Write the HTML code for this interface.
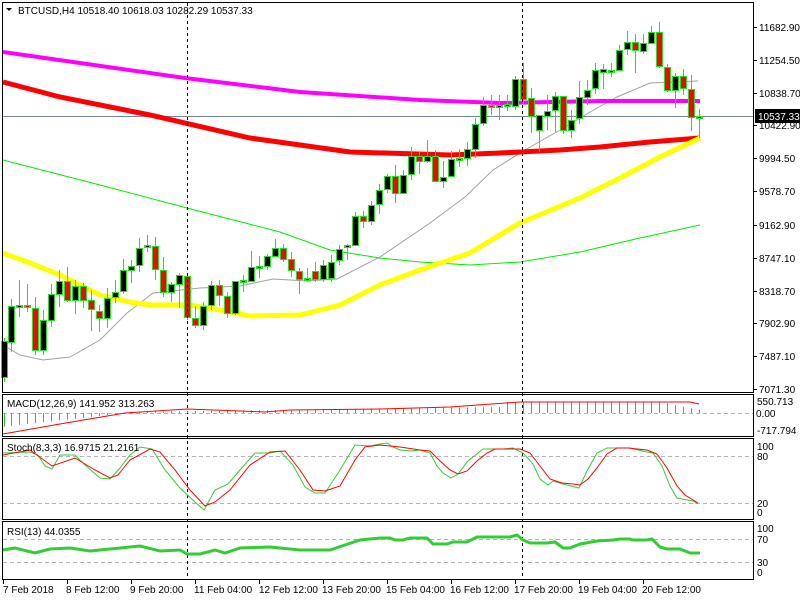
<!DOCTYPE html>
<html><head><meta charset="utf-8">
<style>
html,body{margin:0;padding:0;background:#fff;}
svg{display:block;font-family:"Liberation Sans",sans-serif;font-size:10px;}
</style></head>
<body>
<svg id="c" width="800" height="600" xmlns="http://www.w3.org/2000/svg">
<rect width="800" height="600" fill="#fff"/>
<!-- grid / levels -->
<g stroke="#b4b4b4" stroke-dasharray="4,3" stroke-width="1">
<line x1="3" y1="413.5" x2="753" y2="413.5"/>
<line x1="3" y1="456.5" x2="753" y2="456.5"/>
<line x1="3" y1="503.5" x2="753" y2="503.5"/>
<line x1="3" y1="539.5" x2="753" y2="539.5"/>
<line x1="3" y1="562.5" x2="753" y2="562.5"/>
</g>
<line x1="3" y1="116.5" x2="753" y2="116.5" stroke="#778899" stroke-width="1"/>
<!-- MAs -->
<polyline fill="none" stroke="#00ee00" stroke-width="1" points="3,160 100,185 187,208 280,232 330,250 380,258 420,262 470,265 520,262 580,252 640,238 700,225"/>
<polyline fill="none" stroke="#a0a0a0" stroke-width="1" points="3,345 20,355 43,360 70,357 100,340 127,313 153,293 200,288 240,286 273,279 307,281 337,279 380,257 430,223 465,197 493,170 525,150 560,130 590,112 617,97 650,83 698,81"/>
<polyline fill="none" stroke="#ff00ff" stroke-width="4" points="3,52 80,63 185,78 300,92 420,100 500,103 600,101 700,101"/>
<polyline fill="none" stroke="#ff0000" stroke-width="5" points="3,82 60,97 150,115 250,138 350,152 450,155 500,153 560,150 600,147 650,142 700,138"/>
<polyline fill="none" stroke="#ffff00" stroke-width="5" points="3,253 30,263 60,275 100,295 130,302 150,305 190,305 220,310 250,316 300,315 340,305 380,285 420,270 470,253 520,223 580,198 620,178 660,157 700,138"/>
<g id="candles"></g>
<!-- vertical dashed -->
<g stroke="#000" stroke-dasharray="3,3" stroke-width="1">
<line x1="187.5" y1="3" x2="187.5" y2="580"/>
<line x1="522.5" y1="3" x2="522.5" y2="580"/>
</g>
<!-- MACD -->
<g id="macd"></g>
<polyline fill="none" stroke="#ff0000" stroke-width="1" points="3,434 60,424 125,413 187,409 240,411 265,412 290,410 380,409 450,407 520,402 600,402 690,402 699,404"/>
<!-- Stoch -->
<polyline fill="none" stroke="#32cd32" stroke-width="1" points="3,453 30,452 38,455 45,466 52,469 60,455 75,455 85,465 100,478 110,479 120,468 130,455 140,447 152,449 165,470 180,488 195,502 204,510 215,490 228,484 240,470 255,453 270,453 280,451 293,465 305,487 315,493 325,493 340,470 355,445 370,446 380,444 387,443 393,447 400,450 410,451 420,450 430,453 437,466 443,473 451,478 458,474 468,461 483,449 503,449 513,448 523,453 533,464 540,479 548,485 553,481 563,484 579,488 587,471 597,453 607,448 630,448 647,452 653,453 662,466 670,486 677,498 682,499 693,501 698,504"/>
<polyline fill="none" stroke="#ff0000" stroke-width="1" points="3,455 30,450 52,466 75,458 95,470 110,478 118,475 130,460 150,449 160,452 175,470 190,490 205,506 215,502 230,490 250,465 270,452 285,451 300,470 313,490 325,491 340,486 355,460 365,447 380,445 400,447 420,450 430,451 440,461 450,470 458,474 467,471 477,461 487,453 495,449 520,449 530,453 540,466 550,479 562,483 573,484 580,485 588,479 597,468 607,454 617,448 628,448 647,450 657,454 667,468 677,486 685,495 698,503"/>
<!-- RSI -->
<polyline fill="none" stroke="#32cd32" stroke-width="3" points="3,550 15,548 35,553 50,549 70,548 90,551 110,549 140,546 160,551 180,550 187,554 200,554 215,550 225,553 240,548 270,547 300,550 330,550 345,545 360,540 380,538 390,538 395,540 403,540 410,538 427,538 433,544 447,544 453,542 467,542 477,537 510,537 517,535 523,540 530,543 547,543 555,542 563,548 570,548 580,544 597,541 613,540 620,539 630,539 633,540 647,540 652,539 660,547 667,549 680,549 690,553 700,553"/>
<!-- borders -->
<g fill="none" stroke="#000" stroke-width="1">
<rect x="2.5" y="2.5" width="751" height="390"/>
<rect x="2.5" y="394.5" width="751" height="42"/>
<rect x="2.5" y="438.5" width="751" height="81"/>
<rect x="2.5" y="521.5" width="751" height="58"/>
</g>
<!-- header -->
<polygon points="6,8 12,8 9,11" fill="#000"/>
<text x="18" y="14" fill="#000">BTCUSD,H4  10518.40 10618.03 10282.29 10537.33</text>
<text x="7" y="407" fill="#000">MACD(12,26,9) 141.952 313.263</text>
<text x="7" y="451" fill="#000">Stoch(8,3,3) 16.9715 21.2161</text>
<text x="7" y="535" fill="#000">RSI(13) 44.0355</text>
<!-- price axis -->
<g fill="#000" id="pax">
<text x="759" y="31">11682.90</text>
<text x="759" y="64">11254.50</text>
<text x="759" y="97">10838.70</text>
<text x="759" y="129">10422.90</text>
<text x="759" y="162">9994.50</text>
<text x="759" y="195">9578.70</text>
<text x="759" y="229">9162.90</text>
<text x="759" y="262">8747.10</text>
<text x="759" y="295">8318.70</text>
<text x="759" y="327">7902.90</text>
<text x="759" y="360">7487.10</text>
<text x="759" y="393">7071.30</text>
</g>
<g stroke="#000"><line x1="754" y1="27.5" x2="757" y2="27.5"/><line x1="754" y1="60.5" x2="757" y2="60.5"/><line x1="754" y1="93.5" x2="757" y2="93.5"/><line x1="754" y1="125.5" x2="757" y2="125.5"/><line x1="754" y1="158.5" x2="757" y2="158.5"/><line x1="754" y1="191.5" x2="757" y2="191.5"/><line x1="754" y1="225.5" x2="757" y2="225.5"/><line x1="754" y1="258.5" x2="757" y2="258.5"/><line x1="754" y1="291.5" x2="757" y2="291.5"/><line x1="754" y1="323.5" x2="757" y2="323.5"/><line x1="754" y1="356.5" x2="757" y2="356.5"/><line x1="754" y1="389.5" x2="757" y2="389.5"/></g>
<rect x="755" y="109" width="45" height="14" fill="#000"/>
<text x="758" y="120" fill="#fff">10537.33</text>
<g fill="#000">
<text x="757" y="405">550.713</text>
<text x="756" y="417">0.00</text>
<text x="757" y="434">-717.794</text>
<text x="757" y="450">100</text>
<text x="757" y="460">80</text>
<text x="757" y="507">20</text>
<text x="757" y="516">0</text>
<text x="757" y="532">100</text>
<text x="757" y="543">70</text>
<text x="757" y="566">30</text>
<text x="757" y="576">0</text>
</g>
<!-- time axis -->
<g fill="#000">
<text x="3" y="593">7 Feb 2018</text>
<text x="66" y="593">8 Feb 12:00</text>
<text x="130" y="593">9 Feb 20:00</text>
<text x="194" y="593">11 Feb 04:00</text>
<text x="259" y="593">12 Feb 12:00</text>
<text x="322" y="593">13 Feb 20:00</text>
<text x="386" y="593">15 Feb 04:00</text>
<text x="450" y="593">16 Feb 12:00</text>
<text x="514" y="593">17 Feb 20:00</text>
<text x="578" y="593">19 Feb 04:00</text>
<text x="642" y="593">20 Feb 12:00</text>
</g>
<g stroke="#000"><line x1="3.5" y1="580" x2="3.5" y2="584"/><line x1="67.5" y1="580" x2="67.5" y2="584"/><line x1="131.5" y1="580" x2="131.5" y2="584"/><line x1="195.5" y1="580" x2="195.5" y2="584"/><line x1="259.5" y1="580" x2="259.5" y2="584"/><line x1="323.5" y1="580" x2="323.5" y2="584"/><line x1="387.5" y1="580" x2="387.5" y2="584"/><line x1="451.5" y1="580" x2="451.5" y2="584"/><line x1="515.5" y1="580" x2="515.5" y2="584"/><line x1="579.5" y1="580" x2="579.5" y2="584"/><line x1="643.5" y1="580" x2="643.5" y2="584"/></g>
</svg>
<script>
var C=[
[4,341,377,338,382,1],[11,306,342,299,352,1],[19,305,307,280,317,1],[27,305,307,284,312,0],[35,308,350,297,355,0],[43,320,350,310,355,1],[51,294,320,284,327,1],[59,281,294,270,307,1],[67,281,300,267,302,0],[75,286,300,280,314,1],[83,286,300,283,308,0],[91,300,309,290,331,0],[99,311,318,305,332,0],[107,298,318,288,328,1],[115,292,297,280,303,1],[123,270,291,259,294,1],[131,266,270,260,283,1],[139,248,265,238,272,1],[147,245,247,235,252,1],[155,246,269,237,280,0],[163,270,292,257,297,0],[171,284,292,282,302,1],[179,275,284,273,308,1],[187,276,317,273,320,0],[195,318,325,306,328,0],[203,306,325,302,330,1],[211,285,305,281,310,1],[219,285,295,280,306,0],[227,296,313,292,318,0],[235,281,313,281,315,1],[243,280,282,275,292,1],[251,267,281,251,282,1],[259,266,268,256,278,1],[267,256,266,254,270,1],[275,248,256,239,257,1],[283,248,259,244,262,0],[291,259,270,252,277,0],[299,271,279,268,294,0],[307,278,280,268,282,1],[315,271,279,262,282,0],[323,265,279,260,282,1],[331,262,278,255,282,1],[339,249,260,245,265,1],[347,245,247,244,260,1],[355,216,245,212,246,1],[363,216,221,211,228,0],[371,205,221,201,225,1],[379,190,204,184,214,1],[387,176,189,174,193,1],[395,176,193,165,203,0],[403,175,193,170,194,1],[411,156,174,147,180,1],[419,156,161,152,174,0],[427,156,161,140,163,1],[435,156,181,150,181,0],[443,177,181,161,188,1],[451,159,176,151,177,1],[459,158,160,149,167,1],[467,149,158,142,166,1],[475,124,149,118,158,1],[483,105,123,97,126,1],[491,105,107,95,115,0],[499,105,107,95,120,1],[507,104,106,95,111,1],[515,79,106,76,110,1],[523,79,99,63,104,0],[531,98,116,88,133,0],[539,115,130,115,152,1],[547,111,116,95,130,1],[555,96,110,92,132,1],[563,96,130,96,134,0],[571,120,130,110,138,1],[579,97,118,81,124,1],[587,90,97,80,105,1],[595,70,88,63,94,1],[603,69,72,64,89,1],[611,70,72,63,77,1],[619,50,70,45,71,1],[627,42,49,31,55,1],[635,42,50,34,73,0],[643,43,51,34,54,1],[651,32,43,26,44,1],[659,32,66,22,68,0],[667,67,90,64,92,0],[675,76,90,73,108,1],[683,76,88,69,95,0],[691,89,117,75,131,0],[699,116,118,109,138,1]];
var ns="http://www.w3.org/2000/svg",g=document.getElementById('candles'),m=document.getElementById('macd');
function el(t,a,p){var e=document.createElementNS(ns,t);for(var k in a)e.setAttribute(k,a[k]);p.appendChild(e);return e;}
C.forEach(function(c,i){var x=c[0];
el('line',{x1:x+.5,y1:c[3],x2:x+.5,y2:c[4],stroke:'#22e022','stroke-width':1},g);
var h=Math.max(c[2]-c[1],1);
if(c[2]-c[1]<=2){el('line',{x1:x-3,y1:c[1]+1.5,x2:x+4,y2:c[1]+1.5,stroke:'#22e022','stroke-width':c[2]-c[1]+1},g);if(c[2]-c[1]>=2)el('rect',{x:x-1,y:c[1]+1,width:3,height:1,fill:c[5]?'#000':'#f00'},g);}
else el('rect',{x:x-2.5,y:c[1]+.5,width:6,height:h,fill:c[5]?'#000':'#f00',stroke:'#22e022','stroke-width':1},g);
// macd histogram
var v;
if(x<125){v=-14*(1-x/125);}else if(x<500){v=1+ (x-125)/375*5;}else if(x<660){v=11;}else{v=11-(x-660)/40*8;}
var y0=413,y1=413-v;
el('line',{x1:x+.5,y1:Math.min(y0,y1),x2:x+.5,y2:Math.max(y0,y1),stroke:'#22cc22','stroke-width':1},m);
});
</script>
</body></html>
